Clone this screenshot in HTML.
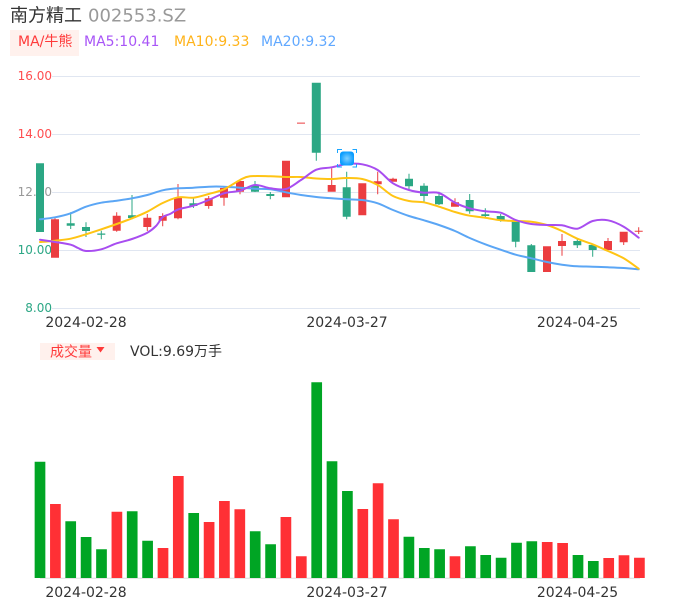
<!DOCTYPE html>
<html lang="zh">
<head>
<meta charset="utf-8">
<title>南方精工 002553.SZ</title>
<style>
html,body{margin:0;padding:0;background:#fff;}
body{width:686px;height:606px;overflow:hidden;position:relative;}
svg{position:absolute;left:0;top:0;display:block;}
text{font-family:"DejaVu Sans","Noto Sans CJK SC",sans-serif;}
</style>
</head>
<body>
<svg width="686" height="606" viewBox="0 0 686 606" xmlns="http://www.w3.org/2000/svg">
<text x="10" y="21.5" font-size="18" fill="#333">南方精工</text>
<text x="88" y="21.5" font-size="18" fill="#999">002553.SZ</text>
<rect x="10" y="30" width="69" height="26" fill="#fff1ed"/>
<text x="18" y="46" font-size="14" fill="#ff3a3a">MA/牛熊</text>
<text x="84" y="46" font-size="14" fill="#a855f7">MA5:10.41</text>
<text x="174" y="46" font-size="14" fill="#ffb31a">MA10:9.33</text>
<text x="261" y="46" font-size="14" fill="#60a8ff">MA20:9.32</text>

<path d="M52 76.5H640M52 134.5H640M52 192.5H640M52 250.5H640M52 308.5H640" stroke="#e0e6f1" stroke-width="1" fill="none"/>
<text x="52" y="80" font-size="12" text-anchor="end" fill="#ff4d4f">16.00</text>
<text x="52" y="138" font-size="12" text-anchor="end" fill="#ff4d4f">14.00</text>
<text x="52" y="196" font-size="12" text-anchor="end" fill="#999">12.00</text>
<text x="52" y="254" font-size="12" text-anchor="end" fill="#2ca785">10.00</text>
<text x="52" y="312" font-size="12" text-anchor="end" fill="#2ca785">8.00</text>

<path fill="none" stroke="#2ba784" stroke-width="1" d="M70.7 212.3V229M86 222.3V237M101.3 230.7V239.3M132 195V219.3M193.4 198V208M255 181V192M270.3 192V199.3M316.3 152V160.7M346.7 171.7V219.3M409 173.7V189.7M424 183.3V202M439 191.7V205M469.7 194V213.7M485.3 208.3V217.3M500.7 214V221.7M515.7 241V247.3M531.3 244V246M577.3 239.3V248M592.7 245V256.7"/>
<path fill="none" stroke="#eb3d40" stroke-width="1" d="M55 217V220M116.7 212.3V231.7M147.3 214V231M162.7 213.3V226.3M178 184V219.3M208.7 196V208.7M224 187V205.7M240 181V194.3M331.7 168.3V186M377.7 171.7V194.3M393 177.7V180M455 198.3V203M562 234V255.7M608 238V242M623.7 241V245M638.7 227.3V234"/>
<path fill="none" stroke="#2ba784" stroke-width="8" d="M40 163.3V232M70.7 223.3V225.7M86 227V231M101.3 233.5V234.7M132 215.3V218M193.4 203.3V206M255 185.3V191.7M270.3 194V196M346.7 187.3V216.7M409 178.7V186.3M424 185.7V196M439 196V204.3M469.7 200V211.3M485.3 214.3V216M500.7 216V220M515.7 220.7V241.7M531.3 245.3V272M577.3 241V245.3M592.7 245V250"/>
<path fill="none" stroke="#2ba784" stroke-width="9" d="M316.3 82.7V152.7"/>
<path fill="none" stroke="#eb3d40" stroke-width="8" d="M55 219.3V257.7M116.7 215.7V230.7M147.3 217.7V227M162.7 216V220.7M178 197.7V218.3M208.7 198.3V206M224 188V197.7M240 181V191.7M286 160.7V197.3M301 122.6V123.6M331.7 185V191.7M362.3 183.3V215.3M377.7 181.3V184.3M393 178.7V181.7M455 202.3V206.7M547 246.3V272M562 241V246M608 241V250M623.7 231.7V242.3M638.7 230.7V231.7"/>

<g fill="none" stroke-width="2" stroke-linejoin="round" stroke-linecap="round">
<polyline class="ma" stroke="#5ba6f5" points="40,219.3 55,217.3 70.7,213.3 86,206.7 101.3,202.7 116.7,200.7 132,198.3 147.3,195 162.7,190.3 178,188.3 193.4,187.7 208.7,186.7 224,186.7 240,187.7 255,188.7 270.3,189.3 286,192.3 301,195 316.3,197 331.7,198.3 346.7,199.3 362.3,200 377.7,203.3 393,210 409,216 424,220.3 439,225 455,231 469.7,238 485.3,244.3 500.7,249.7 515.7,254.7 531.3,258.3 547,262 562,264.7 577.3,266.3 592.7,266.7 608,267.3 623.7,268 638.7,269.3"/>
<polyline class="ma" stroke="#ffc414" points="40,242 55,240.7 70.7,238.7 86,234.3 101.3,229.3 116.7,224 132,218.3 147.3,211.7 162.7,203 178,197.3 193.4,197.7 208.7,194 224,189.3 240,180 250,176.3 270.3,176.3 286,177 301,177 316.3,178.5 331.7,179 346.7,178 362.3,179 377.7,185 393,196 409,201 424,202.3 439,206.7 455,212 469.7,215.7 485.3,217.7 500.7,220.3 515.7,221 531.3,221.7 547,225 562,231 577.3,238.7 592.7,244.3 608,251 623.7,258.3 638.7,268.7"/>
<polyline class="ma" stroke="#a84df0" points="40,239.7 55,242 70.7,244.7 78,248 86,251 101.3,249.3 116.7,243.3 132,239 147.3,232.7 156,226 162.7,217 170,214 178,209.5 193.4,205.7 208.7,200 224,193.3 240,190.7 255,185 270.3,188.3 286,189 301,180 316.3,169.7 331.7,167.3 346.7,164 362.3,164.3 377.7,170 393,183.3 409,190 424,192.7 439,193 455,202.7 469.7,208.3 485.3,211.3 500.7,212.7 515.7,220 531.3,224 547,225 562,225.3 577.3,228.7 592.7,221 608,220.3 623.7,226.7 638.7,237.7"/>
</g>

<defs><radialGradient id="m"><stop offset="0" stop-color="#7fd0ff"/><stop offset="1" stop-color="#0a9dff"/></radialGradient></defs>
<rect x="340" y="151.5" width="14" height="14" rx="3" fill="url(#m)"/>
<path d="M337.5 153V149.5H342M352.5 149.5H356.5V153M337.5 164V167H342M352.5 167H356.5V164" fill="none" stroke="#1aa5ff" stroke-width="1"/>

<text x="86" y="327" font-size="14" text-anchor="middle" fill="#333">2024-02-28</text>
<text x="347" y="327" font-size="14" text-anchor="middle" fill="#333">2024-03-27</text>
<text x="577.5" y="327" font-size="14" text-anchor="middle" fill="#333">2024-04-25</text>

<rect x="40" y="343" width="75" height="17" fill="#fff1ed"/>
<text x="50" y="356.5" font-size="14" fill="#ff3a3a">成交量</text>
<path d="M96.5 347H104.5L100.5 352.5Z" fill="#ff3a3a"/>
<text x="130" y="356" font-size="14" fill="#333">VOL:9.69万手</text>

<path d="M40 578.3H640" stroke="#ddd" stroke-width="1"/>
<path fill="none" stroke="#00a524" stroke-width="10.7" d="M40 461.7V578M70.7 521.3V578M86.1 537V578M101.5 549.3V578M132.2 511.3V578M147.6 540.7V578M193.7 513V578M255.2 531.3V578M270.6 544.3V578M316.7 382.3V578M332 461.3V578M347.4 491V578M408.9 536.7V578M424.3 548V578M439.6 549.3V578M470.4 546.3V578M485.7 555V578M501.1 557.7V578M516.5 542.7V578M531.8 541.3V578M578 555V578M593.3 561V578"/>
<path fill="none" stroke="#ff3035" stroke-width="10.7" d="M55.4 504V578M116.9 511.7V578M163 548V578M178.3 476V578M209.1 522V578M224.4 501V578M239.8 509.3V578M285.9 517V578M301.3 556.3V578M362.8 509V578M378.1 483.3V578M393.5 519.3V578M455 556.3V578M547.2 542V578M562.6 543V578M608.7 558V578M624 555.3V578M639.4 557.7V578"/>
<text x="86" y="597" font-size="14" text-anchor="middle" fill="#333">2024-02-28</text>
<text x="347" y="597" font-size="14" text-anchor="middle" fill="#333">2024-03-27</text>
<text x="577.5" y="597" font-size="14" text-anchor="middle" fill="#333">2024-04-25</text>
</svg>
<script>
document.querySelectorAll('polyline.ma').forEach(function(l){
  var p=l.getAttribute('points').trim().split(/\s+/).map(function(s){return s.split(',').map(Number);});
  var d='M'+p[0][0]+' '+p[0][1];
  for(var i=0;i<p.length-1;i++){
    var a=p[Math.max(i-1,0)],b=p[i],c=p[i+1],e=p[Math.min(i+2,p.length-1)];
    d+='C'+(b[0]+(c[0]-a[0])/6).toFixed(1)+' '+(b[1]+(c[1]-a[1])/6).toFixed(1)+' '+(c[0]-(e[0]-b[0])/6).toFixed(1)+' '+(c[1]-(e[1]-b[1])/6).toFixed(1)+' '+c[0]+' '+c[1];
  }
  var n=document.createElementNS('http://www.w3.org/2000/svg','path');
  n.setAttribute('d',d);
  n.setAttribute('stroke',l.getAttribute('stroke'));
  l.parentNode.replaceChild(n,l);
});
</script>
</body>
</html>
